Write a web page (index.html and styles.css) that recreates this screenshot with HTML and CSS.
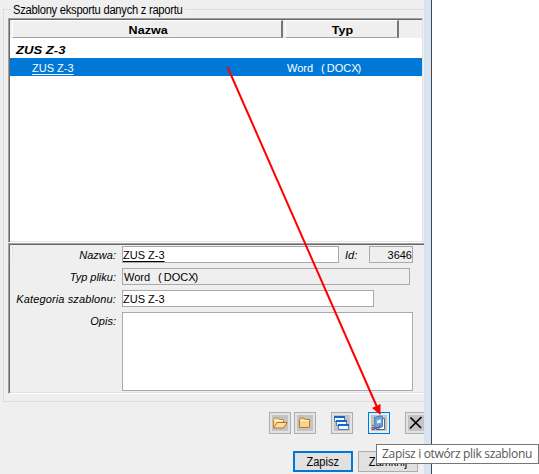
FILE: index.html
```html
<!DOCTYPE html>
<html lang="pl">
<head>
<meta charset="utf-8">
<title>Szablony eksportu danych z raportu</title>
<link rel="stylesheet" href="styles.css">
</head>
<body>
<main class="window">
  <section class="group">
    <h1 class="legend"><span class="t-legend">Szablony eksportu danych z raportu</span></h1>
    <div class="list">
      <div class="head">
        <div class="cell name"><span class="wide">Nazwa</span></div>
        <div class="cell type"><span class="wide">Typ</span></div>
      </div>
      <div class="category"><span class="t-cat">ZUS Z-3</span></div>
      <div class="row"><span class="link">ZUS Z-3</span><span class="docx">Word<i>(</i>DOCX<b>)</b></span></div>
    </div>
    <div class="details">
      <span class="mark"></span>
      <div class="line"><label>Nazwa:</label><div class="field f-name"><u>ZUS Z-3</u></div><span class="id">Id:</span><div class="field f-id">3646</div></div>
      <div class="line"><label>Typ pliku:</label><div class="field f-type"><span class="docx">Word<i>(</i>DOCX<b>)</b></span></div></div>
      <div class="line"><label class="long">Kategoria szablonu:</label><div class="field f-cat">ZUS Z-3</div></div>
      <div class="line"><label>Opis:</label><div class="field f-desc"></div></div>
    </div>
  </section>
  <div class="tools">
    <div class="tool"><svg width="16" height="16" viewBox="0 0 16 16"><path d="M1.500 13V4.500l1-1.500h4l1 1.500h4v4" fill="#f8dc9c" stroke="#c58a35"/><path d="M1.500 13L5 7.500h10.200L11.500 13z" fill="#ffdf98" stroke="#b9722a"/><path d="M2.500 5.500h8.500" stroke="#fff6dc"/></svg></div>
    <div class="tool"><svg width="16" height="16" viewBox="0 0 16 16"><path d="M2.500 12.500V4.500l1-1.500h3.500l1 1.500h4.500v8z" fill="#f9d58a" stroke="#b9782a"/><path d="M3.500 5.500h8.500" stroke="#fff4d6"/></svg></div>
    <div class="tool gap"><svg width="18" height="18" viewBox="0 0 18 18"><g fill="#f4f7fc" stroke="#5279ac"><path d="M1.500 2.500v5h10v-5z"/><path d="M3.500 6.500v5h10v-5z"/><path d="M5.500 10.500v5h10v-5z"/></g><path d="M1 3h11M3 7h11M5 11h11" stroke="#1268c8" stroke-width="2"/></svg></div>
    <div class="tool gap active"><svg width="16" height="16" viewBox="0 0 16 16"><path d="M10 3.500h3.500v11H6" fill="#fff" stroke="#5a6b80"/><path d="M3.500 2.500L10 .8l1.500 1v10L4 13.500z" fill="#6fa5da" stroke="#457bb5"/><path d="M6.500 5.800l3-.8v2.200l-3 .8z" fill="#fff" stroke="#dbe9f7"/><path d="M1 10l2 1M1 12.500h2.500v2H1zM5.500 12.500H8v2H5.500zM3.500 13.500h2M8 12l1.500-2" fill="#d9a8c8" stroke="#4d416e" stroke-width=".8"/></svg></div>
    <div class="tool gap"><svg width="16" height="16" viewBox="0 0 16 16"><path d="M2.500 2.500L13 13M13.500 2L2 13.500" stroke="#000" stroke-width="1.700"/></svg></div>
  </div>
  <div class="buttons"><div class="btn primary"><span>Zapisz</span></div><div class="btn"><span>Zamknij</span></div></div>
</main>
<div class="edge"></div>
<svg class="arrow" width="539" height="474" viewBox="0 0 539 474"><path d="M227.500 67L377 407" stroke="#f00" stroke-width="2" fill="none"/><path d="M380.500 415L372 408L380.500 404z" fill="#f00"/></svg>
<div class="tooltip"><span>Zapisz i otwórz plik szablonu</span></div>
</body>
</html>
```
FILE: styles.css
```css
* { box-sizing: border-box; }
body {
  margin: 0; height: 474px; overflow: hidden; display: flex; position: relative;
  background: #fff; color: #000; font: 11px/14px "Liberation Sans", Arial, sans-serif;
}
.window { width: 424px; height: 474px; background: #efefef; overflow: hidden; flex: none; }
.edge { width: 8px; background: #d7e4f2; border-right: 1px solid #454549; flex: none; }
.group { margin: 9px 0 0 3px; height: 393px; border: 1px solid #dcdcdc; border-right: 0; padding-left: 4px; }
.legend { margin: -8px 0 0 3px; height: 16px; width: 174px; padding-left: 2px; background: #efefef; font: 12px/17px "Liberation Sans", Arial, sans-serif; white-space: nowrap; }
.t-legend { display: inline-block; letter-spacing: -.28px; transform: scaleX(.932); transform-origin: 0 0; }
.list { width: 415px; height: 225px; background: #fff; border: 1px solid #a0a0a0; border-right-color: #e3e3e3; border-bottom-color: #fff; box-shadow: inset 1px 1px #696969, inset 0 -1px #e3e3e3; padding: 1px 0 0 1px; }
.head { height: 18px; display: flex; gap: 2px; padding-left: 2px; background: #efefef; }
.cell { height: 18px; border: 1px solid #fff; border-right: 2px solid #777; border-bottom: 1px solid #a0a0a0; text-align: center; font: bold 11px/18px "Liberation Sans", Arial, sans-serif; }
.name { width: 271px; padding-left: 2px; }
.type { width: 114px; padding-left: 2px; }
.wide { display: inline-block; transform: scaleX(1.14); }
.category { height: 20px; padding: 5px 0 0 6px; font: italic bold 11px/14px "Liberation Sans", Arial, sans-serif; }
.t-cat { display: inline-block; transform: scaleX(1.19); transform-origin: 0 0; }
.row { height: 18px; display: flex; background: #0078d7; color: #fff; padding-left: 22px; line-height: 20px; }
.link { width: 255px; text-decoration: underline; text-underline-offset: 2px; }
.docx i { font-style: normal; margin: 0 2px 0 8px; }
.docx b { font-weight: normal; margin-left: -1px; }
.details { position: relative; width: 416px; height: 151px; border: 1px solid #a0a0a0; border-right: 0; border-bottom-color: #fff; box-shadow: inset 1px 1px #696969, inset 0 -1px #e3e3e3; padding: 2px 0 0 1px; display: flex; flex-direction: column; gap: 5px; }
.mark { position: absolute; left: 2px; top: 3px; width: 2px; height: 15px; background: #f8f4ec; border-right: 1px dotted #f0cfa5; }
.line { display: flex; }
label { width: 106px; text-align: right; margin-right: 6px; font-style: italic; line-height: 19px; height: 17px; white-space: nowrap; }
.long { letter-spacing: .13px; }
.field { height: 17px; border: 1px solid #a9a9af; background: #fff; line-height: 17px; white-space: nowrap; }
.field u { text-underline-offset: 2px; }
.f-name { width: 217px; }
.id { width: 30px; height: 17px; padding-left: 6px; font-style: italic; line-height: 19px; }
.f-id { width: 44px; background: #efefef; text-align: right; }
.f-type { width: 288px; background: #efefef; padding-left: 1px; }
.f-cat { width: 252px; }
.f-desc { width: 291px; height: 79px; }
.tools { display: flex; margin: 10px 0 0 269px; gap: 3px; }
.tool { width: 22px; height: 22px; flex: none; border: 1px solid #adadad; background: #c3c3c3; box-shadow: inset 0 0 0 2px #e3e3e3; display: flex; align-items: center; justify-content: center; }
.tool.gap { margin-left: 12px; }
.tool.active { border-color: #0078d7; box-shadow: inset 0 0 0 2px #e5eff8; }
.buttons { display: flex; gap: 5px; margin: 17px 0 0 293px; }
.btn { width: 60px; height: 21px; border: 1px solid #adadad; background: #e1e1e1; text-align: center; font-size: 12px; line-height: 20px; }
.btn.primary { border: 2px solid #0078d7; line-height: 18px; }
.btn span { display: inline-block; transform: scaleX(.92); }
.arrow { position: absolute; left: 0; top: 0; }
.tooltip { position: absolute; left: 376px; top: 444px; width: 163px; height: 20px; border: 1px solid #767676; background: #fff; color: #575757; padding-left: 5px; font: 12px/18px "Open Sans", "Noto Sans", sans-serif; white-space: nowrap; }
.tooltip span { letter-spacing: -.32px; }
```
